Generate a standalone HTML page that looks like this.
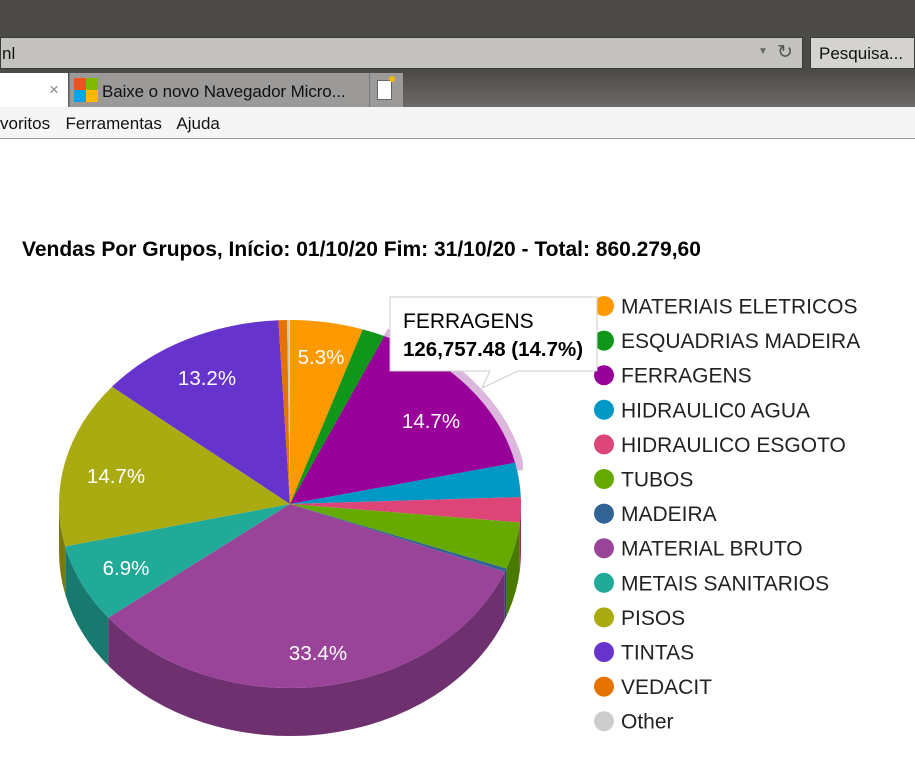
<!DOCTYPE html>
<html><head><meta charset="utf-8"><style>
body{margin:0;width:915px;height:769px;overflow:hidden;background:#fff;font-family:"Liberation Sans",Arial,sans-serif;position:relative}
.abs{position:absolute}
</style></head><body>
<div class="abs" style="left:0;top:0;width:915px;height:36px;background:#4b4a48"></div>
<div class="abs" style="left:0;top:36px;width:915px;height:36px;background:#4b4a48"></div>
<div class="abs" style="left:0;top:37px;width:803px;height:32px;background:#c3c2bf;border:1px solid #3a3a38;box-sizing:border-box"></div>
<div class="abs" style="left:2px;top:44px;font-size:17px;color:#111">nl</div>
<div class="abs" style="left:758px;top:46px;font-size:10px;color:#666">▼</div>
<div class="abs" style="left:777px;top:41px;font-size:19px;color:#555">↻</div>
<div class="abs" style="left:810px;top:37px;width:105px;height:32px;background:#d4d3d0;border:1px solid #3a3a38;box-sizing:border-box"></div>
<div class="abs" style="left:819px;top:44px;font-size:17px;color:#111">Pesquisa...</div>
<div class="abs" style="left:0;top:71px;width:915px;height:36px;background:linear-gradient(#4b4a48,#6c6b69)"></div>
<div class="abs" style="left:0;top:73px;width:68px;height:34px;background:#fff"></div>
<div class="abs" style="left:49px;top:80px;font-size:17px;color:#888">×</div>
<div class="abs" style="left:69px;top:73px;width:299px;height:34px;background:#9b9a98;border-left:1px solid #777"></div>
<div class="abs" style="left:74px;top:78px;width:12px;height:12px;background:#f25022"></div>
<div class="abs" style="left:86px;top:78px;width:12px;height:12px;background:#7fba00"></div>
<div class="abs" style="left:74px;top:90px;width:12px;height:12px;background:#00a4ef"></div>
<div class="abs" style="left:86px;top:90px;width:12px;height:12px;background:#ffb900"></div>
<div class="abs" style="left:102px;top:82px;font-size:17px;letter-spacing:-0.1px;color:#111">Baixe o novo Navegador Micro...</div>
<div class="abs" style="left:369px;top:73px;width:33px;height:34px;background:#9b9a98;border-left:1px solid #777"></div>
<div class="abs" style="left:377px;top:80px;width:13px;height:18px;background:#fff;border:1px solid #666"></div>
<div class="abs" style="left:389px;top:76px;width:6px;height:6px;background:#f5b800;border-radius:50%"></div>
<div class="abs" style="left:0;top:107px;width:915px;height:32px;background:#f5f5f5;border-bottom:1px solid #999;box-sizing:border-box"></div>
<div class="abs" style="left:0;top:114px;font-size:17px;color:#111;word-spacing:3px">voritos&nbsp; Ferramentas&nbsp; Ajuda</div>
<div class="abs" style="left:22px;top:238px;font-size:21px;font-weight:bold;color:#000;white-space:nowrap">Vendas Por Grupos, Início: 01/10/20 Fim: 31/10/20 - Total: 860.279,60</div>
<svg id="s" class="abs" style="left:0;top:0" width="915" height="769"></svg>
<script>
var cx=290,cy=504,rx=231,ry=184,d=48;
var sl=[[0,5.1,'#ff9900'],[5.1,6.7,'#109618'],[6.7,21.4,'#990099'],[21.4,24.4,'#0099c6'],[24.4,26.6,'#dd4477'],[26.6,30.7,'#66aa00'],[30.7,31.0,'#316395'],[31.0,64.4,'#994499'],[64.4,71.3,'#22aa99'],[71.3,86.0,'#aaaa11'],[86.0,99.2,'#6633cc'],[99.2,99.8,'#e67300'],[99.8,100,'#cccccc']];
function P(p,dy){var t=p/100*2*Math.PI;return [cx+rx*Math.sin(t),cy-ry*Math.cos(t)+(dy||0)];}
function dk(c){var n=parseInt(c.slice(1),16);var r=(n>>16)*.72|0,g=((n>>8)&255)*.72|0,b=(n&255)*.72|0;return 'rgb('+r+','+g+','+b+')';}
var h='';
(function(){var a=6.7,b=21.4,r2=rx+8,ry2=ry+8;function Q(p,dy){var t=p/100*2*Math.PI;return [cx+r2*Math.sin(t),cy-ry2*Math.cos(t)+(dy||0)];}
var s=Q(a),e=Q(b),s2=Q(b,9);h+='<path d="M'+cx+','+cy+'L'+s+'A'+r2+','+ry2+' 0 0 1 '+e+'L'+s2+'Z" fill="#ddb6dd"/>';})();
sl.forEach(function(x){var a=Math.max(x[0],25),b=Math.min(x[1],75);if(b<=a)return;var s=P(a),e=P(b),e2=P(b,d),s2=P(a,d);
h+='<path d="M'+s+'A'+rx+','+ry+' 0 0 1 '+e+'L'+e2+'A'+rx+','+ry+' 0 0 0 '+s2+'Z" fill="'+dk(x[2])+'"/>';});
sl.forEach(function(x){var s=P(x[0]),e=P(x[1]),lg=(x[1]-x[0])>50?1:0;
h+='<path d="M'+cx+','+cy+'L'+s+'A'+rx+','+ry+' 0 '+lg+' 1 '+e+'Z" fill="'+x[2]+'"/>';});
var L=[[321,357,'5.3%'],[431,421,'14.7%'],[207,378,'13.2%'],[116,476,'14.7%'],[126,568,'6.9%'],[318,653,'33.4%']];
L.forEach(function(l){h+='<text x="'+l[0]+'" y="'+(l[1]+7)+'" fill="#fff" font-size="20.5" text-anchor="middle" font-family="Liberation Sans,Arial,sans-serif">'+l[2]+'</text>';});
var names=['MATERIAIS ELETRICOS','ESQUADRIAS MADEIRA','FERRAGENS','HIDRAULIC0 AGUA','HIDRAULICO ESGOTO','TUBOS','MADEIRA','MATERIAL BRUTO','METAIS SANITARIOS','PISOS','TINTAS','VEDACIT','Other'];
names.forEach(function(n,i){var y=306+i*34.6;h+='<circle cx="604" cy="'+y+'" r="10" fill="'+sl[i][2]+'"/><text x="621" y="'+(y+7.5)+'" font-size="21" fill="#222" font-family="Liberation Sans,Arial,sans-serif">'+n+'</text>';});
h+='<path d="M390,297H597V371H518L482,388L490,371H390Z" fill="#fff" stroke="#ccc" stroke-width="1"/>';
h+='<text x="403" y="328" font-size="21" fill="#000" font-family="Liberation Sans,Arial,sans-serif">FERRAGENS</text>';
h+='<text x="403" y="356" font-size="20.5" font-weight="bold" fill="#000" font-family="Liberation Sans,Arial,sans-serif">126,757.48 (14.7%)</text>';
document.getElementById('s').innerHTML=h;
</script>
</body></html>
